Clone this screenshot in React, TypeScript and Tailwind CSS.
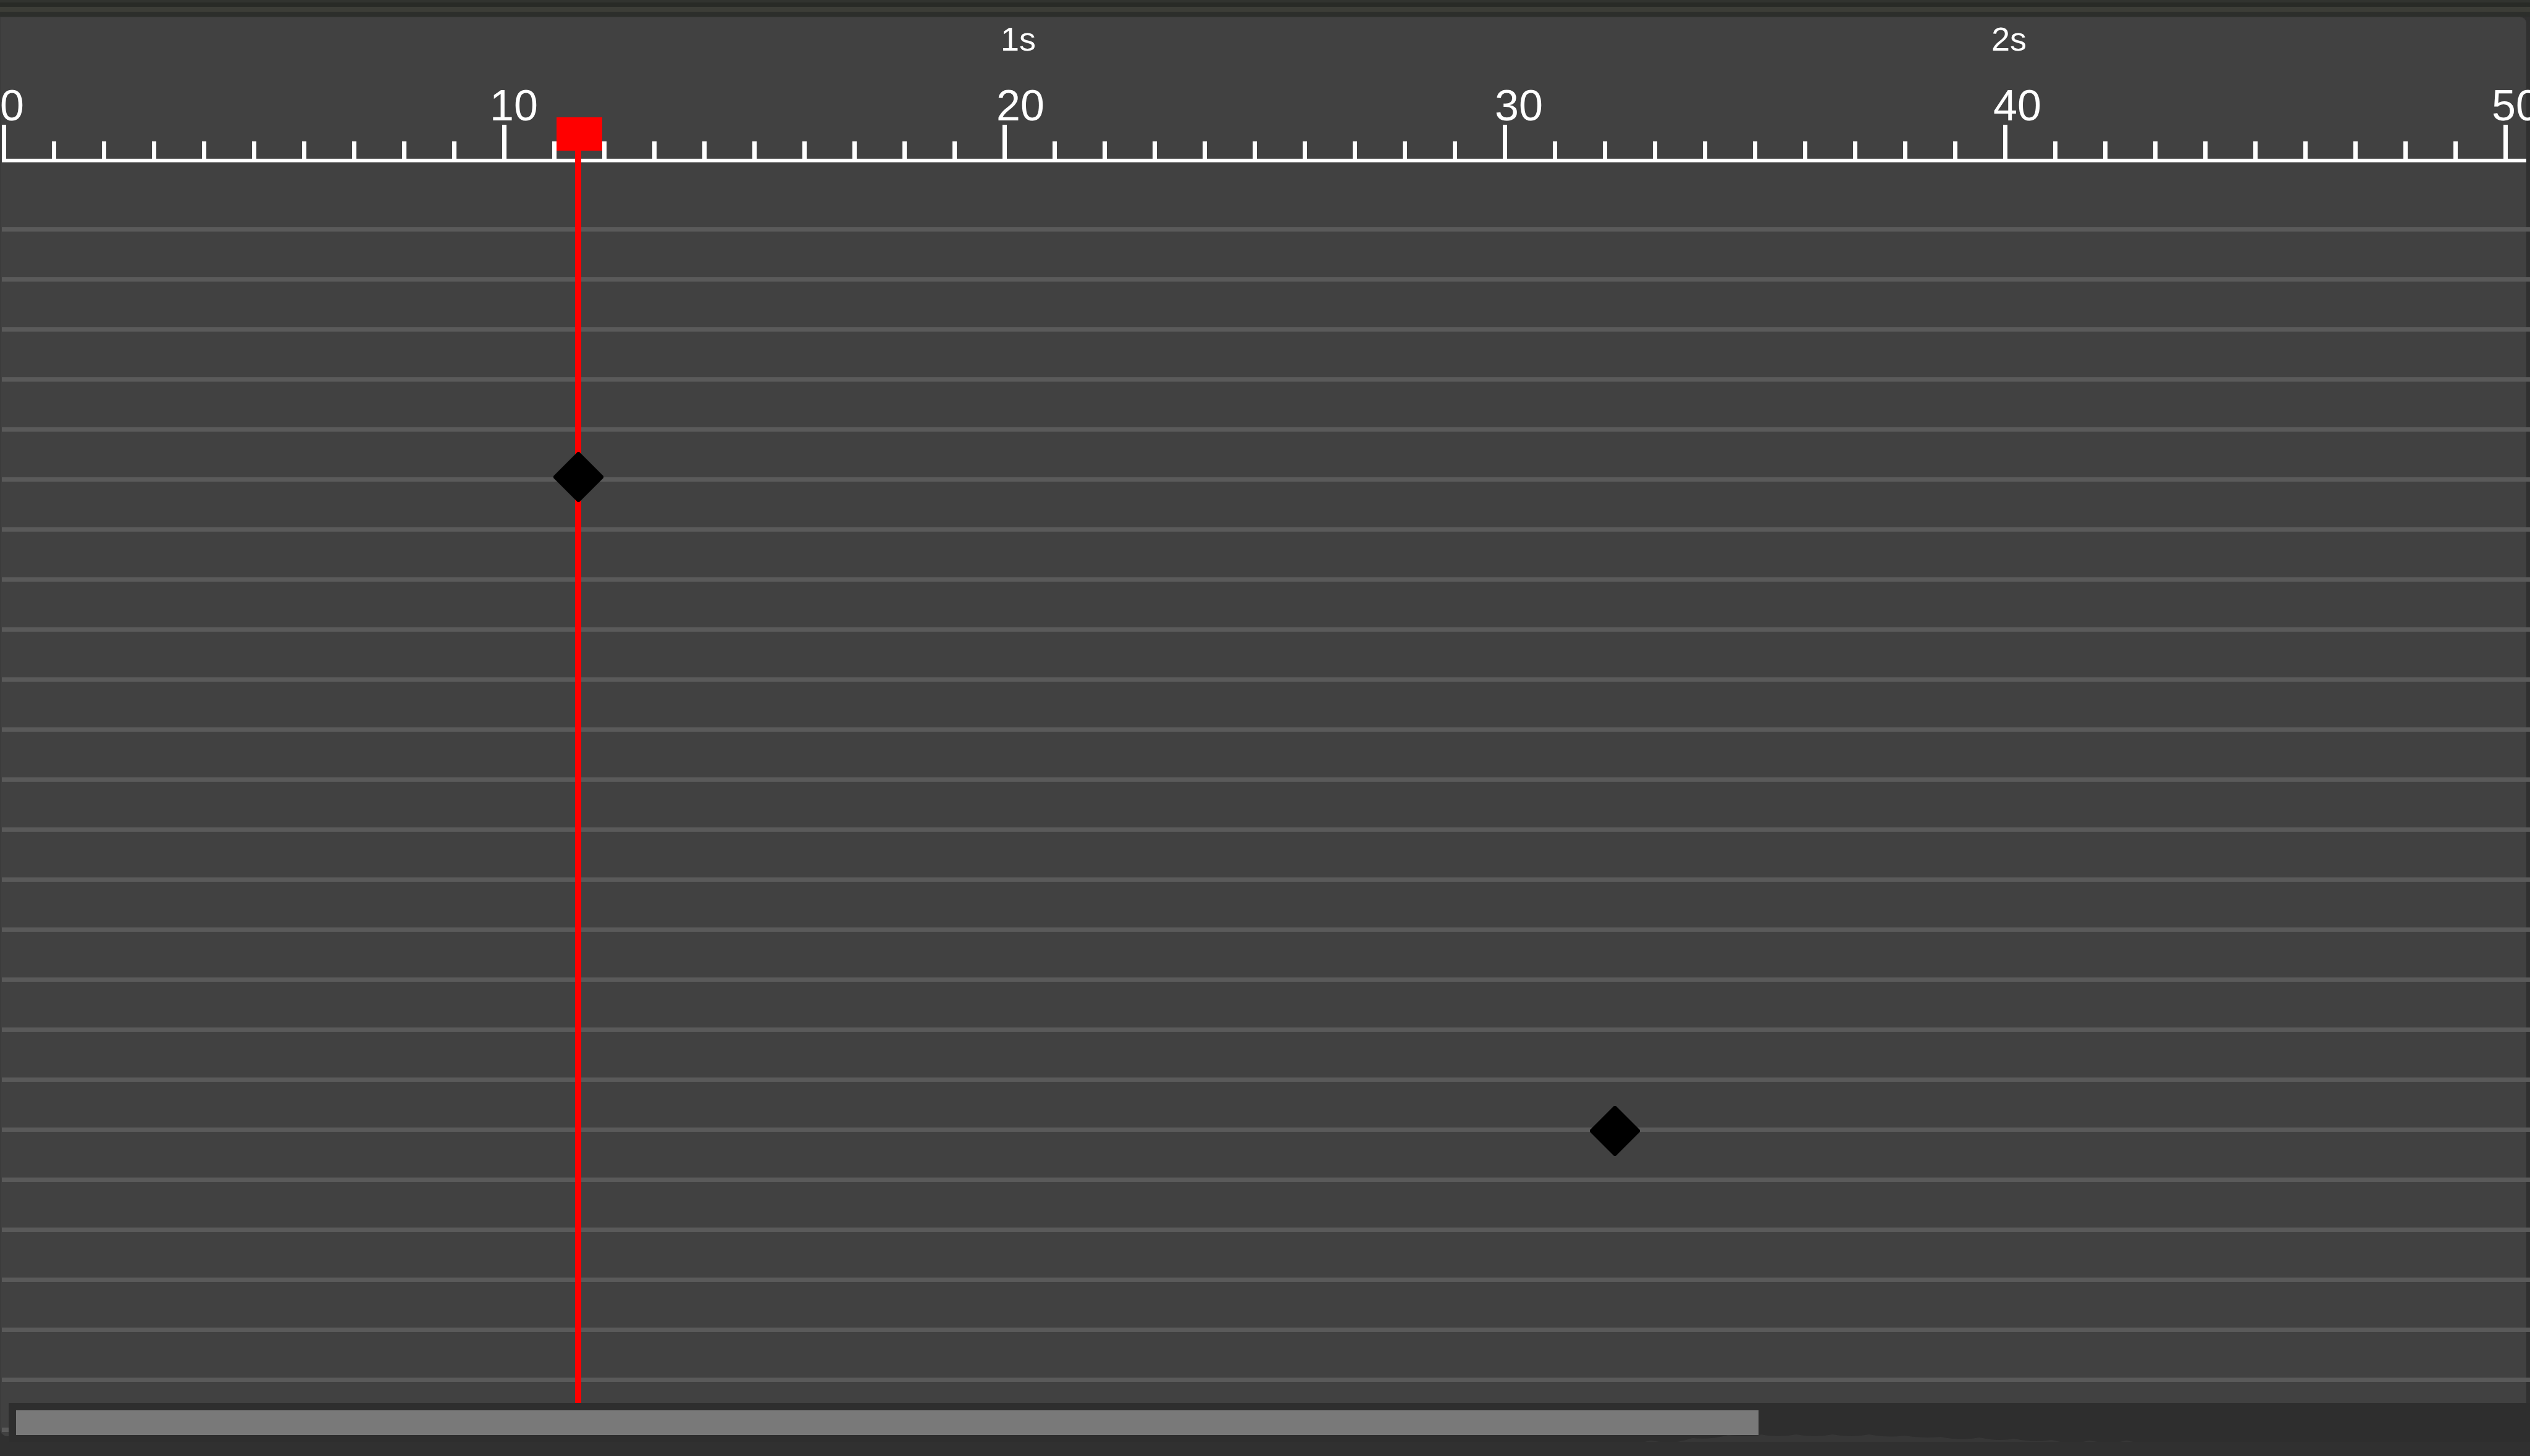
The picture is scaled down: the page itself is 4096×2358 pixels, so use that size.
const secondLabels = [
  { text: "1s", width: "w-[1604px]" },
  { text: "2s", width: "w-[807px]" },
];

const frameLabels = [
  { text: "0", width: "w-[793px]" },
  { text: "10", width: "w-[820px]" },
  { text: "20", width: "w-[807px]" },
  { text: "30", width: "w-[807px]" },
  { text: "40", width: "w-[807px]" },
  { text: "50", width: "w-[80px]" },
];

const keyframes = [
  { name: "Keyframe, frame 11", left: 896, top: 705 },
  { name: "Keyframe, frame 32", left: 2574, top: 1764 },
];

const ticks = Array.from({ length: 51 }, (_, i) => i);
const rows = Array.from({ length: 25 }, (_, i) => i);

function TopEdge() {
  return (
    <div className="shrink-0">
      <div className="h-1 bg-[#31332f]" />
      <div className="h-[7px] bg-[#282a26]" />
      <div className="h-2 bg-[#3c3d37]" />
      <div className="h-2 bg-[#2c2e2b]" />
    </div>
  );
}

function Ruler() {
  return (
    <div className="flex flex-col text-white">
      <div className="flex pl-[1620px] text-[54px] leading-[72px]">
        {secondLabels.map((l) => (
          <div key={l.text} className={`shrink-0 ${l.width}`}>
            {l.text}
          </div>
        ))}
      </div>
      <div className="mt-[41px] flex text-[70px] leading-[62px]">
        {frameLabels.map((l) => (
          <div key={l.text} className={`shrink-0 ${l.width}`}>
            {l.text}
          </div>
        ))}
      </div>
      <div className="mr-[6px] overflow-hidden pl-[3px]">
        <div className="flex items-end">
          {ticks.map((i) => (
            <div key={i} className="w-[81px] shrink-0">
              <div className={i % 10 === 0 ? "h-[55px] w-[7px] bg-white" : "h-7 w-[7px] bg-white"} />
            </div>
          ))}
        </div>
        <div className="h-[6px] bg-white" />
      </div>
    </div>
  );
}

function Tracks() {
  return (
    <div className="flex flex-col gap-[74px] pl-[3px] pt-[105px]">
      {rows.map((i) => (
        <div key={i} className="h-[7px] shrink-0 bg-[#5a5a5a]" />
      ))}
    </div>
  );
}

function Playhead() {
  return (
    <div className="absolute bottom-[86px] left-[901px] top-[163px] flex w-[74px] flex-col">
      <button aria-label="Playhead" className="h-[54px] w-full shrink-0 bg-[#ff0000]" />
      <div className="ml-[30px] w-[10px] flex-1 bg-[#ff0000]" />
    </div>
  );
}

function ScrollTrack() {
  return (
    <div
      role="scrollbar"
      aria-label="Timeline scroll"
      aria-controls="root"
      aria-valuenow={0}
      className="ml-[14px] h-[63px] bg-[#2e2e2e] pl-3 pt-3"
    >
      <div className="h-10 w-[69.3%] bg-[#797979]" />
      <svg viewBox="0 0 790 15" className="-mt-1 ml-[2638px] h-[15px] w-[790px]" fill="#373737">
        <path d="M-4 15L9 13L24 15ZM51 15Q64 13 76 9Q105 12 134 4Q160 8 186 4V15ZM186 15V3Q215 9 244 3Q274 9 303 3Q333 9 362 3Q391 9 419 5Q449 10 478 7Q512 14 541 8Q570 15 597 10Q630 17 657 12L672 15ZM708 15L719 13L732 15ZM768 15L779 13L790 15Z" />
      </svg>
    </div>
  );
}

export default function App() {
  return (
    <div className="flex h-screen w-full flex-col overflow-hidden bg-[#303030] font-['Liberation_Sans',Arial,sans-serif]">
      <TopEdge />
      <main className="relative flex min-h-0 flex-1 flex-col">
        <div className="absolute inset-0 bottom-8 right-[6px] rounded-bl-xl rounded-tr-[10px] border-l border-t border-[#3a3a3a] bg-[#414141]" />
        <div className="absolute inset-0 bottom-8 overflow-hidden rounded-bl-xl">
          <Ruler />
          <Tracks />
        </div>
        <Playhead />
        {keyframes.map((k) => (
          <button
            key={k.name}
            aria-label={k.name}
            className="absolute size-[81px]"
            style={{ left: k.left, top: k.top }}
          >
            <svg viewBox="0 0 81 81" className="size-full">
              <polygon points="39,0 42,0 81,39 81,42 42,81 39,81 0,42 0,39" fill="#000" />
            </svg>
          </button>
        ))}
        <div className="relative mt-auto pb-[23px]">
          <ScrollTrack />
        </div>
      </main>
    </div>
  );
}
